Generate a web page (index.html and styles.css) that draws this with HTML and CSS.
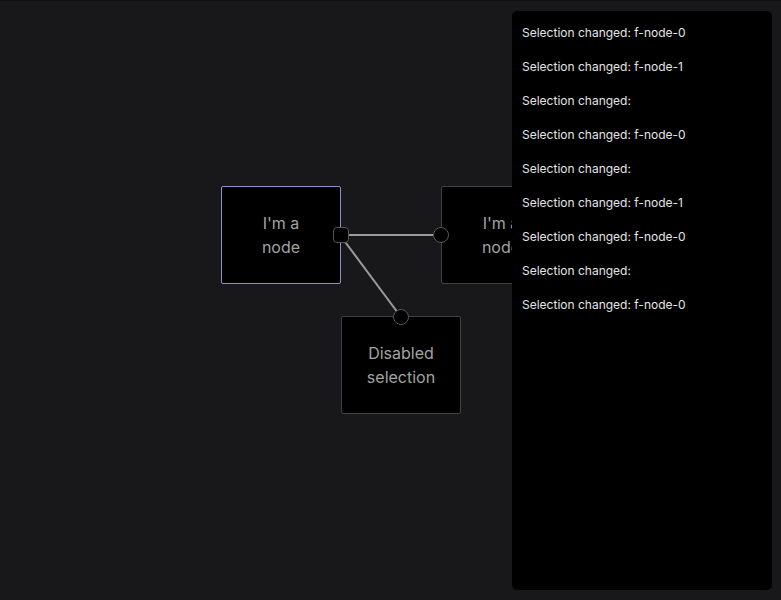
FILE: index.html
```html
<!DOCTYPE html>
<html lang="en">
<head>
    <meta charset="UTF-8">
    <meta name="viewport" content="width=device-width, initial-scale=1.0">
    <title>Selection changed</title>
    <link rel="stylesheet" href="styles.css">
</head>
<body>

    <div class="flow">
      <svg class="edges" width="781" height="600">
        <line x1="340" y1="235" x2="441" y2="235" />
        <line x1="340" y1="235" x2="401" y2="317" />
      </svg>

      <div class="node selected" style="left: 221px; top: 186px;">
        I'm a node
        <span class="handle out"></span>
      </div>

      <div class="node" style="left: 441px; top: 186px;">
        I'm a node
        <span class="handle in-left"></span>
      </div>

      <div class="node" style="left: 341px; top: 316px;">
        Disabled selection
        <span class="handle in-top"></span>
      </div>

      <div class="log">
        <div class="log-item">Selection changed: f-node-0</div>
        <div class="log-item">Selection changed: f-node-1</div>
        <div class="log-item">Selection changed: </div>
        <div class="log-item">Selection changed: f-node-0</div>
        <div class="log-item">Selection changed: </div>
        <div class="log-item">Selection changed: f-node-1</div>
        <div class="log-item">Selection changed: f-node-0</div>
        <div class="log-item">Selection changed: </div>
        <div class="log-item">Selection changed: f-node-0</div>
      </div>
    </div>

</body>
</html>
```

FILE: styles.css
```css
:root {
  --bg: #18181b;
  --node-border: #414146;
  --node-text: #a3a3a3;
  --edge: #9b9b9b;
  --selected: #8f8fcf;
}

body {
  margin: 0;
  font-family: Inter, "Noto Sans", sans-serif;
  background-color: var(--bg);
  height: 100vh;
  overflow: hidden;
}

.flow {
  position: relative;
  width: 100%;
  height: 100vh;
  border-top: 1px solid #0e0e10;
  box-sizing: border-box;
  overflow: hidden;
}

.edges {
  position: absolute;
  left: 0;
  top: -1px;
}

.edges line {
  stroke: var(--edge);
  stroke-width: 2;
}

.node {
  position: absolute;
  width: 120px;
  box-sizing: border-box;
  padding: 24px;
  margin-top: -1px;
  background: #000;
  border: 1px solid var(--node-border);
  border-radius: 2px;
  color: var(--node-text);
  font-size: 16px;
  line-height: 24px;
  text-align: center;
}

.node.selected {
  border-color: var(--selected);
}

.handle {
  position: absolute;
  width: 16px;
  height: 16px;
  box-sizing: border-box;
  background: #000;
  border: 1px solid #55555a;
}

.handle.out {
  right: -9px;
  top: 40px;
  border-radius: 4px;
}

.handle.in-left {
  left: -9px;
  top: 40px;
  border-radius: 50%;
}

.handle.in-top {
  left: 51px;
  top: -8px;
  border-radius: 50%;
}

.log {
  position: absolute;
  top: 10px;
  right: 9px;
  bottom: 10px;
  width: 260px;
  box-sizing: border-box;
  padding: 11px 10px 10px;
  background: #000;
  border-radius: 5px;
  display: flex;
  flex-direction: column;
  gap: 12px;
}

.log-item {
  color: #e4e4e7;
  font-size: 12px;
  line-height: 22px;
  white-space: nowrap;
}
```
